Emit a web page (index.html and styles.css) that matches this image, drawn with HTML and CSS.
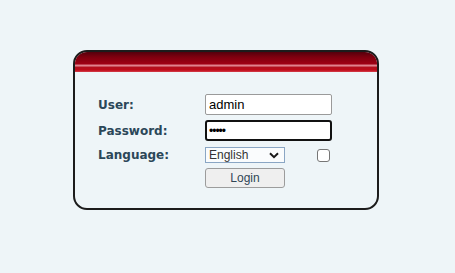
FILE: index.html
```html
<!DOCTYPE html>
<html>
	<head>
		<meta charset="UTF-8">
		<title>Login</title>
		<link rel="stylesheet" href="styles.css">
	</head>
	<body>
		<div class="login_box">
			<div class="login_head"></div>
			<form class="login_form">
				<label class="lbl" for="user">User:</label>
				<div class="cell"><input class="txt" id="user" type="text" value="admin"></div>

				<label class="lbl" for="pwd">Password:</label>
				<div class="cell"><input class="txt txt_focus" id="pwd" type="password" value="admin"></div>

				<label class="lbl row_lang">Language:</label>
				<div class="cell row_lang">
					<div class="sel">
						<span class="sel_text">English</span>
						<svg class="sel_arrow" width="10" height="7" viewBox="0 0 10 7"><path d="M1 1.2 L5 5.2 L9 1.2" fill="none" stroke="#1a1a1a" stroke-width="2"/></svg>
					</div>
					<span class="chk"></span>
				</div>

				<span class="lbl row_btn"></span>
				<div class="cell row_btn"><button class="btn" type="button">Login</button></div>
			</form>
		</div>
	</body>
</html>
```

FILE: styles.css
```css
*{
	padding: 0;
	margin: 0;
	box-sizing: border-box;
}
body{
	background: #eef5f8;
	font-family: "DejaVu Sans", Verdana, sans-serif;
}
.login_box{
	width: 306px;
	height: 160px;
	margin: 50px 0 0 73px;
	border: 2px solid #1c1c1c;
	border-radius: 14px;
	overflow: hidden;
	background: #eef5f8;
}
.login_head{
	height: 20px;
	background: linear-gradient(to bottom,
		#54000c 0px,
		#7e000f 5px,
		#960012 10px,
		#9e0014 12px,
		#dc7a86 13px,
		#e48c96 14px,
		#b0101e 15px,
		#c00a18 18px,
		#d4404c 20px);
}
.login_form{
	display: grid;
	grid-template-columns: 107px 1fr;
	grid-template-rows: 21px 21px 16px 20px;
	row-gap: 5px;
	align-items: center;
	padding: 22px 0 0 23px;
}
.row_lang{
	margin-top: 2px;
}
.row_btn{
	margin-top: 1px;
}
.lbl{
	font-size: 12px;
	font-weight: bold;
	color: #2b4759;
}
.cell{
	display: flex;
	align-items: center;
	height: 100%;
}
.txt{
	width: 127px;
	height: 21px;
	border: 1px solid #9a9a9a;
	border-radius: 2px;
	background: #fff;
	padding: 0 3px;
	font-family: "Liberation Sans", Arial, sans-serif;
	font-size: 13px;
	color: #000;
	outline: none;
}
.txt_focus{
	border: 2px solid #111;
	border-radius: 3px;
	padding: 0 2px;
	font-size: 12px;
	letter-spacing: -1px;
}
.sel{
	position: relative;
	width: 80px;
	height: 16px;
	border: 1px solid #8aa6c4;
	background: #fafcfd;
	display: flex;
	align-items: center;
	padding-left: 3px;
	font-family: "Liberation Sans", Arial, sans-serif;
	font-size: 12px;
	color: #333;
}
.sel_arrow{
	position: absolute;
	right: 5px;
	top: 4px;
}
.chk{
	width: 13px;
	height: 13px;
	margin-left: 32px;
	border: 1px solid #767676;
	border-radius: 3px;
	background: #fff;
}
.btn{
	width: 80px;
	height: 20px;
	border: 1px solid #9c9c9c;
	border-radius: 3px;
	background: #efefef;
	font-family: "Liberation Sans", Arial, sans-serif;
	font-size: 12px;
	color: #2f4656;
}
```
